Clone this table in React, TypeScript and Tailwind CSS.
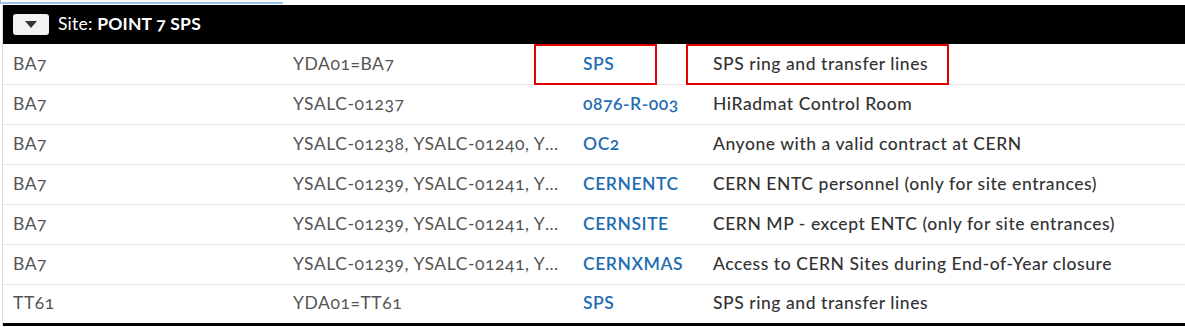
import React from "react";

type Row = { building: string; locks: string; area: string; desc: string };

const ROWS: Row[] = [
  { building: "BA7", locks: "YDA01=BA7", area: "SPS", desc: "SPS ring and transfer lines" },
  { building: "BA7", locks: "YSALC-01237", area: "0876-R-003", desc: "HiRadmat Control Room" },
  { building: "BA7", locks: "YSALC-01238, YSALC-01240, YSALC-01242", area: "OC2", desc: "Anyone with a valid contract at CERN" },
  { building: "BA7", locks: "YSALC-01239, YSALC-01241, YSALC-01243", area: "CERNENTC", desc: "CERN ENTC personnel (only for site entrances)" },
  { building: "BA7", locks: "YSALC-01239, YSALC-01241, YSALC-01243", area: "CERNSITE", desc: "CERN MP - except ENTC (only for site entrances)" },
  { building: "BA7", locks: "YSALC-01239, YSALC-01241, YSALC-01243", area: "CERNXMAS", desc: "Access to CERN Sites during End-of-Year closure" },
  { building: "TT61", locks: "YDA01=TT61", area: "SPS", desc: "SPS ring and transfer lines" },
];

export default function App() {
  return (
    <div
      className="relative w-[1185px] h-[327px] overflow-hidden bg-white text-[17.5px] tracking-[0.55px]"
      style={{ fontFamily: "Lato, 'Open Sans', sans-serif", fontFeatureSettings: '"onum"' }}
    >
      <div className="h-[5px]">
        <div className="w-[283px] h-[4px] border-l border-b-2 border-[#9cc3e6]" />
      </div>
      <div className="ml-[2px] border-l border-[#dcdcdc]">
        <div className="flex h-[39px] items-center gap-[9px] bg-black pl-[10px] text-white tracking-[0.2px]">
          <button className="flex h-[21px] w-[36px] items-center justify-center rounded-[3px] bg-[#f2f2f2]">
            <span className="block h-0 w-0 border-x-[6px] border-t-[7px] border-x-transparent border-t-[#333]" />
          </button>
          <span>
            Site: <b className="font-bold">POINT 7 SPS</b>
          </span>
        </div>
        <table className="w-full table-fixed border-collapse">
          <colgroup>
            <col className="w-[280px]" />
            <col className="w-[290px]" />
            <col className="w-[130px]" />
            <col />
          </colgroup>
          <tbody>
            {ROWS.map((r, i) => (
              <tr key={i} className="h-[40px] border-b border-[#e6e6e6] last:border-b-[3px] last:border-black">
                <td className="pl-[10px] text-[#555]">{r.building}</td>
                <td className="truncate pl-[10px] pr-[8px] text-[#555]">{r.locks}</td>
                <td className="pl-[10px] font-semibold text-[#1f6db3]">{r.area}</td>
                <td className="pl-[10px] font-medium text-[#333]">{r.desc}</td>
              </tr>
            ))}
          </tbody>
        </table>
      </div>
      <div className="pointer-events-none absolute left-[534px] top-[44px] h-[41px] w-[123px] border-2 border-[#e00000]" />
      <div className="pointer-events-none absolute left-[686px] top-[44px] h-[41px] w-[263px] border-2 border-[#e00000]" />
    </div>
  );
}
